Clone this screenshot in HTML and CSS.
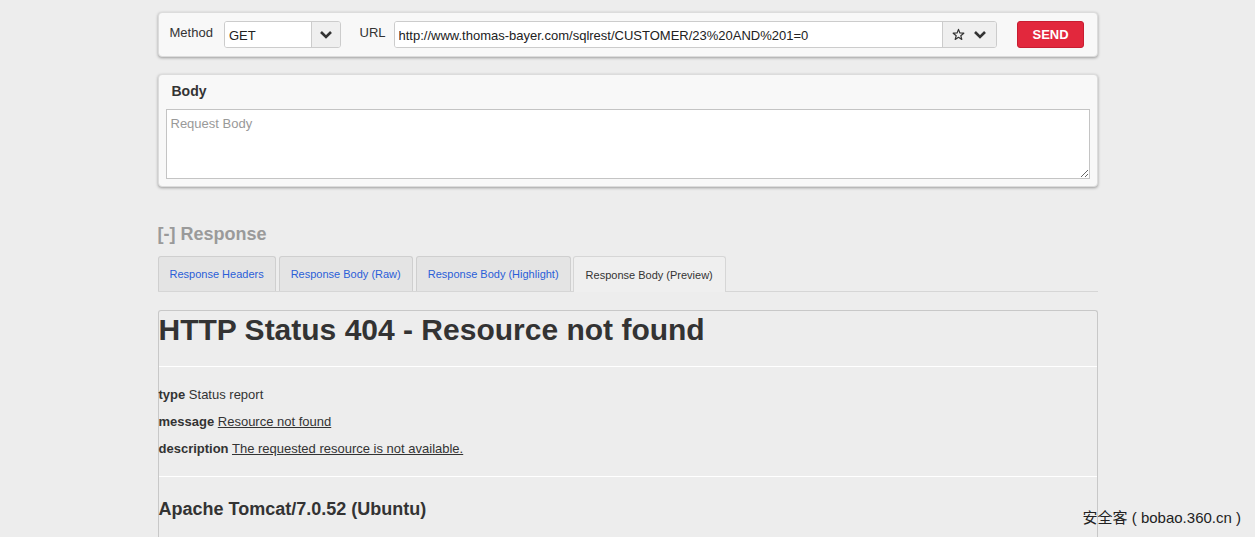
FILE: index.html
```html
<!DOCTYPE html>
<html lang="en">
<head>
<meta charset="utf-8">
<title>REST Client</title>
<link rel="stylesheet" href="styles.css">
</head>
<body>
<div class="page">
	<div class="panel request_bar">
		<label class="field_label">Method</label>
		<div class="combo method_combo">
			<input class="combo_input" type="text" value="GET">
			<span class="combo_btn">
				<svg width="12" height="9" viewBox="0 0 12 9"><path d="M1 2 L6 7 L11 2" fill="none" stroke="#333" stroke-width="2.6"/></svg>
			</span>
		</div>
		<label class="field_label url_label">URL</label>
		<div class="combo url_combo">
			<input class="combo_input" type="text" value="http://www.thomas-bayer.com/sqlrest/CUSTOMER/23%20AND%201=0">
			<span class="combo_btn url_btn">
				<svg width="13" height="13" viewBox="0 0 24 24"><path d="M12 2.5 L14.6 9.2 L21.8 9.6 L16.2 14.2 L18.1 21.2 L12 17.2 L5.9 21.2 L7.8 14.2 L2.2 9.6 L9.4 9.2 Z" fill="none" stroke="#333" stroke-width="2.2" stroke-linejoin="round"/></svg>
				<svg width="12" height="9" viewBox="0 0 12 9"><path d="M1 2 L6 7 L11 2" fill="none" stroke="#333" stroke-width="2.6"/></svg>
			</span>
		</div>
		<button class="send_btn">SEND</button>
	</div>

	<div class="panel body_panel">
		<div class="panel_title">Body</div>
		<textarea class="body_text" placeholder="Request Body"></textarea>
	</div>

	<h2 class="response_title">[-] Response</h2>

	<div class="tabs">
		<span class="tab">Response Headers</span>
		<span class="tab">Response Body (Raw)</span>
		<span class="tab">Response Body (Highlight)</span>
		<span class="tab tab_active">Response Body (Preview)</span>
	</div>

	<div class="preview">
		<h1>HTTP Status 404 - Resource not found</h1>
		<hr>
		<p><b>type</b> Status report</p>
		<p><b>message</b> <u>Resource not found</u></p>
		<p><b>description</b> <u>The requested resource is not available.</u></p>
		<hr>
		<h3>Apache Tomcat/7.0.52 (Ubuntu)</h3>
	</div>
</div>
<div class="watermark">安全客 ( bobao.360.cn )</div>
</body>
</html>
```

FILE: styles.css
```css
html, body {
	margin: 0;
	padding: 0;
	height: 100%;
	overflow: hidden;
}

body {
	background: #ededed;
	font-family: "Liberation Sans", Arial, sans-serif;
	color: #333;
	font-size: 13px;
}

.page {
	width: 940px;
	margin: 0 auto;
	padding-top: 12px;
}

.panel {
	background: #f8f8f8;
	border: 1px solid #dcdcdc;
	border-radius: 4px;
	box-shadow: 0 1px 3px rgba(0, 0, 0, 0.35);
	box-sizing: border-box;
}

.request_bar {
	height: 45px;
	display: flex;
	align-items: center;
	padding: 0 12px 0 11px;
}

.field_label {
	font-size: 13px;
	margin-right: 11px;
	position: relative;
	top: -2px;
}

.url_label {
	margin-left: 19px;
	margin-right: 8px;
}

.combo {
	display: flex;
	height: 27px;
	border: 1px solid #ccc;
	border-radius: 3px;
	box-sizing: border-box;
	background: #fff;
	overflow: hidden;
}

.method_combo {
	width: 117px;
}

.url_combo {
	width: 605px;
}

.combo_input {
	flex: 1;
	min-width: 0;
	border: none;
	outline: none;
	padding: 0 4px;
	font-family: "Liberation Sans", Arial, sans-serif;
	font-size: 13px;
	color: #222;
	background: #fff;
	padding-top: 2px;
}

.combo_btn {
	width: 28px;
	background: #efefef;
	border-left: 1px solid #ccc;
	display: flex;
	align-items: center;
	justify-content: center;
}

.url_btn {
	width: 53px;
	gap: 9px;
}

.send_btn {
	margin-left: 20px;
	width: 68px;
	height: 27px;
	background: #e2283d;
	border: 1px solid #c81d31;
	border-radius: 3px;
	color: #fff;
	font-family: "Liberation Sans", Arial, sans-serif;
	font-weight: bold;
	font-size: 13px;
}

.body_panel {
	margin-top: 17px;
	height: 113px;
	padding: 8px 7px 0 7px;
}

.panel_title {
	font-weight: bold;
	font-size: 14px;
	padding-left: 6px;
	height: 26px;
}

.body_text {
	display: block;
	width: 100%;
	height: 70px;
	box-sizing: border-box;
	border: 1px solid #c4c4c4;
	background: #fff;
	font-family: "Liberation Sans", Arial, sans-serif;
	font-size: 13px;
	padding: 6px 4px;
	margin: 0;
	resize: vertical;
}

.body_text::placeholder {
	color: #999;
}

.response_title {
	margin: 37px 0 0 0;
	font-size: 18px;
	font-weight: bold;
	color: #9a9a9a;
	height: 21px;
	line-height: 21px;
}

.tabs {
	margin-top: 11px;
	display: flex;
	gap: 3px;
	border-bottom: 1px solid #d6d6d6;
	height: 35px;
}

.tab {
	display: flex;
	align-items: center;
	padding: 0 11px 0 11px;
	height: 35px;
	box-sizing: border-box;
	background: #e4e4e4;
	border: 1px solid #cfcfcf;
	border-bottom: none;
	border-radius: 3px 3px 0 0;
	color: #2a5ed8;
	font-size: 11px;
}

.tab_active {
	background: #efefef;
	color: #333;
	height: 36px;
	margin-bottom: -1px;
	border-color: #d6d6d6;
	margin-left: -1px;
	padding: 0 12px 0 12px;
}

.preview {
	margin-top: 18px;
	border: 1px solid #c8c8c8;
	border-bottom: none;
	border-radius: 3px 3px 0 0;
	height: 300px;
}

.preview h1 {
	margin: 2px 0 0 0;
	font-size: 30px;
	line-height: 34px;
	height: 53px;
}

.preview hr {
	border: none;
	border-top: 1px solid #fff;
	margin: 0;
}

.preview p {
	margin: 0;
	height: 27px;
	line-height: 27px;
	font-size: 13px;
}

.preview hr + p {
	margin-top: 14px;
}

.preview p:last-of-type {
	margin-bottom: 14px;
}

.preview h3 {
	margin: 20px 0 0 0;
	font-size: 18px;
	line-height: 24px;
}

.watermark {
	position: absolute;
	right: 14px;
	bottom: 10px;
	font-family: "Liberation Sans", "Noto Sans CJK SC", sans-serif;
	font-size: 15px;
	color: #222;
}
```
